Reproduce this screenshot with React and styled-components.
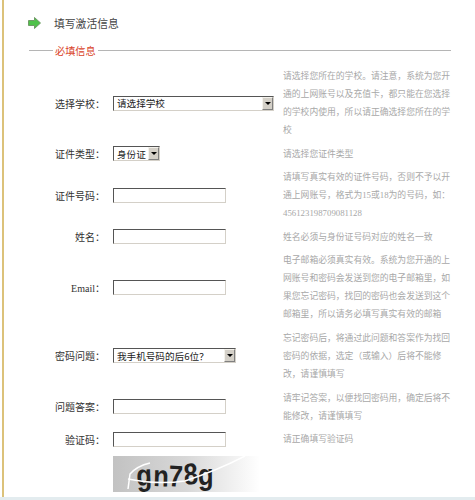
import { Fragment } from 'react';
import styled, { createGlobalStyle } from 'styled-components';

const GlobalStyle = createGlobalStyle`
    html, body {
        margin: 0;
        padding: 0;
        background: #fff;
    }
`;

const Page = styled.div`
    display: flex;
    flex-direction: column;
    width: 475px;
    height: 500px;
    overflow: hidden;
    font-family: "Liberation Serif", "Noto Sans CJK SC", serif;
`;

const Shell = styled.main`
    flex: 1;
    min-height: 0;
    margin-left: 2px;
    padding-top: 16px;
    border-left: 2px solid #dcc27a;
`;

const FooterStrip = styled.div`
    height: 3px;
    background: #e3ecef;
`;

const Heading = styled.h1`
    display: flex;
    align-items: center;
    gap: 13px;
    height: 14px;
    margin: 0 0 13px 24px;
    font-size: 10.8px;
    font-weight: 400;
    color: #444;
`;

const Legend = styled.div`
    display: flex;
    align-items: center;
    gap: 2px;
    width: 422px;
    height: 14px;
    margin: 0 0 10px 25px;
    font-size: 10.2px;
    color: #d9442a;

    &::before,
    &::after {
        content: '';
        height: 1px;
        background: #b5b5b5;
    }

    &::before {
        width: 24px;
    }

    &::after {
        flex: 1;
    }
`;

const Form = styled.form`
    display: grid;
    grid-template-columns: 101px 162px 172px;
    column-gap: 8px;
    row-gap: 5.6px;
    align-items: center;
    margin: 0;
`;

const Label = styled.label`
    text-align: right;
    font-size: 10px;
    color: #333;
`;

const Field = styled.div`
    display: flex;
`;

const TextInput = styled.input`
    box-sizing: border-box;
    width: 113px;
    height: 15px;
    padding: 0 2px;
    background: #fff;
    border-style: solid;
    border-width: 1px;
    border-color: #555 #d4d0c8 #d4d0c8 #555;
    border-radius: 0;
    outline: none;
`;

const Select = styled.div`
    box-sizing: border-box;
    display: flex;
    align-items: center;
    justify-content: space-between;
    width: ${(props) => props.$width}px;
    height: 15px;
    padding: 0 0 0 3px;
    background: #fff;
    border-style: solid;
    border-width: 1px;
    border-color: #555 #d4d0c8 #d4d0c8 #555;
    font-family: "Noto Sans CJK SC", sans-serif;
    font-size: 9.6px;
    color: #222;
    white-space: nowrap;
`;

const SelectArrow = styled.span`
    box-sizing: border-box;
    display: flex;
    align-items: center;
    justify-content: center;
    flex: none;
    width: 11px;
    height: 13px;
    background: #d4d0c8;
    border-style: solid;
    border-width: 1px;
    border-color: #f4f2ec #808080 #808080 #f4f2ec;

    &::after {
        content: '';
        border-style: solid;
        border-width: 3px 3px 0;
        border-color: #000 transparent transparent;
    }
`;

const Tip = styled.div`
    font-size: 8.8px;
    line-height: 18px;
    color: #a8a8a8;
    white-space: nowrap;
`;

const TipLine = styled.div`
    height: 18px;
`;

const CaptchaCell = styled.div`
    grid-column: 2 / 4;
    margin-top: 2px;
`;

const CaptchaBox = styled.div`
    width: 147px;
    height: 36px;
    background: linear-gradient(90deg, #c2c2c2 0%, #d8d8d8 50%, #fff 100%);
`;

const rows = [
    {
        label: '选择学校：',
        select: { text: '请选择学校', width: 161 },
        tip: [
            '请选择您所在的学校。请注意，系统为您开',
            '通的上网账号以及充值卡，都只能在您选择',
            '的学校内使用，所以请正确选择您所在的学',
            '校',
        ],
    },
    {
        label: '证件类型：',
        select: { text: '身份证', width: 47 },
        tip: ['请选择您证件类型'],
    },
    {
        label: '证件号码：',
        tip: [
            '请填写真实有效的证件号码，否则不予以开',
            '通上网账号，格式为15或18为的号码，如：',
            '456123198709081128',
        ],
    },
    {
        label: '姓名：',
        tip: ['姓名必须与身份证号码对应的姓名一致'],
    },
    {
        label: 'Email：',
        tip: [
            '电子邮箱必须真实有效。系统为您开通的上',
            '网账号和密码会发送到您的电子邮箱里，如',
            '果您忘记密码，找回的密码也会发送到这个',
            '邮箱里，所以请务必填写真实有效的邮箱',
        ],
    },
    {
        label: '密码问题：',
        select: { text: '我手机号码的后6位？', width: 123 },
        tip: [
            '忘记密码后，将通过此问题和答案作为找回',
            '密码的依据，选定（或输入）后将不能修',
            '改，请谨慎填写',
        ],
    },
    {
        label: '问题答案：',
        tip: ['请牢记答案，以便找回密码用，确定后将不', '能修改，请谨慎填写'],
    },
    {
        label: '验证码：',
        tip: ['请正确填写验证码'],
    },
];

function ArrowIcon() {
    return (
        <svg width="13" height="12" viewBox="0 0 13 12">
            <polygon points="0.5,3.5 6.5,3.5 6.5,0.5 12.5,6 6.5,11.5 6.5,8.5 0.5,8.5" fill="#4fc24a" stroke="#6f9a66" />
        </svg>
    );
}

function Captcha() {
    return (
        <CaptchaBox>
            <svg width="147" height="36" viewBox="0 0 147 36">
                <text
                    x="28 47 65 84 100"
                    y="30 30 30 29 29"
                    rotate="-3 2 3 -5 0"
                    transform="scale(0.85 1)"
                    fontFamily="Liberation Sans, sans-serif"
                    fontWeight="700"
                    fontSize="30"
                    fill="#222"
                >
                    gn78g
                </text>
                <path d="M15 33 L17 18 Q24 10 37 7" fill="none" stroke="#fff" strokeWidth="1.5" />
                <path d="M15 23 Q45 29 72 25 Q105 14 132 0" fill="none" stroke="#fff" strokeWidth="1.5" />
            </svg>
        </CaptchaBox>
    );
}

export default function App() {
    return (
        <Page>
            <GlobalStyle />
            <Shell>
                <Heading>
                    <ArrowIcon />
                    填写激活信息
                </Heading>
                <Legend>必填信息</Legend>
                <Form>
                    {rows.map((row) => (
                        <Fragment key={row.label}>
                            <Label>{row.label}</Label>
                            <Field>
                                {row.select ? (
                                    <Select $width={row.select.width}>
                                        {row.select.text}
                                        <SelectArrow />
                                    </Select>
                                ) : (
                                    <TextInput />
                                )}
                            </Field>
                            <Tip>
                                {row.tip.map((line) => (
                                    <TipLine key={line}>{line}</TipLine>
                                ))}
                            </Tip>
                        </Fragment>
                    ))}
                    <CaptchaCell>
                        <Captcha />
                    </CaptchaCell>
                </Form>
            </Shell>
            <FooterStrip />
        </Page>
    );
}
